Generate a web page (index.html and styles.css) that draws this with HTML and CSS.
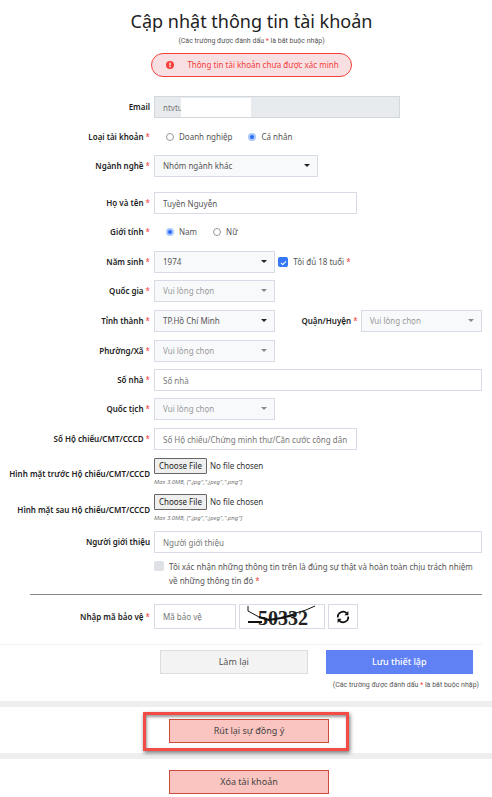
FILE: index.html
```html
<!DOCTYPE html>
<html lang="vi">
<head>
<meta charset="utf-8">
<meta name="viewport" content="width=device-width, initial-scale=1">
<title>Cập nhật thông tin tài khoản</title>
<link rel="stylesheet" href="styles.css">
</head>
<body>
<main>
<form class="account">
  <header class="head">
    <h1>Cập nhật thông tin tài khoản</h1>
    <p class="note">(Các trường được đánh dấu <b class="req">*</b> là bắt buộc nhập)</p>
    <p class="alert">
      <svg viewBox="0 0 16 16" aria-hidden="true"><circle cx="8" cy="8" r="8" fill="#f5403c"/><path d="M6.5 3.5h3v5.3h-3zM6.5 10h3v2.5h-3z" fill="#fbe3e4"/></svg>
      <span>Thông tin tài khoản chưa được xác minh</span>
    </p>
  </header>

  <div class="group">
    <div class="row">
      <label class="name" for="email">Email</label>
      <div class="field w-email masked"><input class="box" id="email" type="text" value="ntvtu" readonly><span class="mask"></span></div>
    </div>
  </div>
  <div class="group">
    <div class="row" role="radiogroup" aria-labelledby="kind">
      <span class="name" id="kind">Loại tài khoản <b class="req">*</b></span>
      <div class="radios">
        <label><input type="radio" name="kind">Doanh nghiệp</label>
        <label><input type="radio" name="kind" checked>Cá nhân</label>
      </div>
    </div>
    <div class="row">
      <label class="name" for="trade">Ngành nghề <b class="req">*</b></label>
      <div class="field w-half pick"><select class="box" id="trade"><option>Nhóm ngành khác</option></select></div>
    </div>
  </div>
  <div class="group spaced">
    <div class="row">
      <label class="name" for="fullname">Họ và tên <b class="req">*</b></label>
      <div class="field w-wide"><input class="box" id="fullname" type="text" value="Tuyền Nguyễn"></div>
    </div>
    <div class="row" role="radiogroup" aria-labelledby="gender">
      <span class="name" id="gender">Giới tính <b class="req">*</b></span>
      <div class="radios">
        <label><input type="radio" name="gender" checked>Nam</label>
        <label><input type="radio" name="gender">Nữ</label>
      </div>
    </div>
  </div>
  <div class="group">
    <div class="row">
      <label class="name" for="year">Năm sinh <b class="req">*</b></label>
      <div class="line">
        <div class="field w-short pick"><select class="box" id="year"><option>1974</option></select></div>
        <label class="tick"><input type="checkbox" checked><span>Tôi đủ 18 tuổi <b class="req">*</b></span></label>
      </div>
    </div>
    <div class="row">
      <label class="name" for="country">Quốc gia <b class="req">*</b></label>
      <div class="field w-short pick empty"><select class="box" id="country"><option>Vui lòng chọn</option></select></div>
    </div>
  </div>
  <div class="group">
    <div class="row">
      <label class="name" for="city">Tỉnh thành <b class="req">*</b></label>
      <div class="line">
        <div class="field w-short pick"><select class="box" id="city"><option>TP.Hồ Chí Minh</option></select></div>
        <label class="name district" for="district">Quận/Huyện <b class="req">*</b></label>
        <div class="field w-short pick empty"><select class="box" id="district"><option>Vui lòng chọn</option></select></div>
      </div>
    </div>
  </div>
  <div class="group">
    <div class="row">
      <label class="name" for="ward">Phường/Xã <b class="req">*</b></label>
      <div class="field w-short pick empty"><select class="box" id="ward"><option>Vui lòng chọn</option></select></div>
    </div>
    <div class="row">
      <label class="name" for="house">Số nhà <b class="req">*</b></label>
      <div class="field"><input class="box" id="house" type="text" placeholder="Số nhà"></div>
    </div>
    <div class="row">
      <label class="name" for="nation">Quốc tịch <b class="req">*</b></label>
      <div class="field w-short pick empty"><select class="box" id="nation"><option>Vui lòng chọn</option></select></div>
    </div>
  </div>
  <div class="group">
    <div class="row">
      <label class="name" for="idno">Số Hộ chiếu/CMT/CCCD <b class="req">*</b></label>
      <div class="field w-wide"><input class="box" id="idno" type="text" placeholder="Số Hộ chiếu/Chứng minh thư/Căn cước công dân"></div>
    </div>
  </div>
  <div class="group files">
    <div class="row">
      <label class="name" for="front">Hình mặt trước Hộ chiếu/CMT/CCCD</label>
      <div class="file"><input type="file" id="front"><small>Max 3.0MB, [".jpg",".jpeg",".png"]</small></div>
    </div>
    <div class="row">
      <label class="name" for="back">Hình mặt sau Hộ chiếu/CMT/CCCD</label>
      <div class="file"><input type="file" id="back"><small>Max 3.0MB, [".jpg",".jpeg",".png"]</small></div>
    </div>
  </div>
  <div class="group consent">
    <div class="row">
      <label class="name" for="ref">Người giới thiệu</label>
      <div class="field"><input class="box" id="ref" type="text" placeholder="Người giới thiệu"></div>
    </div>
    <div class="row">
      <span></span>
      <label class="tick agree"><input type="checkbox"><span>Tôi xác nhận những thông tin trên là đúng sự thật và hoàn toàn chịu trách nhiệm về những thông tin đó <b class="req">*</b></span></label>
    </div>
  </div>
  <hr class="rule">
  <div class="row captcha">
    <label class="name" for="code">Nhập mã bảo vệ <b class="req">*</b></label>
    <div class="line">
      <input class="box code" id="code" type="text" placeholder="Mã bảo vệ">
      <svg class="box picture" viewBox="0 0 84 23" role="img" aria-label="50332">
        <text x="18" y="20" class="digits">50332</text>
        <path d="M8 1v5l11 6 8 2M42 13l14-5 10-3 9-4" fill="none" stroke="#111" stroke-width="1"/>
        <path d="M8 17l14 0M19 12l10 3 12-2 13-3" fill="none" stroke="#111" stroke-width="2"/>
      </svg>
      <button class="box reload" type="button" aria-label="Đổi mã">
        <svg viewBox="0 0 14 14" aria-hidden="true"><g fill="none" stroke="#111" stroke-width="1.7"><path d="M1.8 7.5A5.2 5.2 0 0 1 10.8 3.4"/><path d="M12.2 6.5A5.2 5.2 0 0 1 3.2 10.6"/></g><path d="M12.4 1v4.2H8.4zM1.6 13V8.8h4z" fill="#111"/></svg>
      </button>
    </div>
  </div>
  <footer class="actions">
    <button class="reset" type="reset">Làm lại</button>
    <div class="save">
      <button class="primary" type="submit">Lưu thiết lập</button>
      <p class="note">(Các trường được đánh dấu <b class="req">*</b> là bắt buộc nhập)</p>
    </div>
  </footer>
</form>
<section class="band withdraw">
  <div class="marked"><button class="danger" type="button">Rút lại sự đồng ý</button></div>
</section>
<section class="band remove"><button class="danger" type="button">Xóa tài khoản</button></section>
</main>
</body>
</html>
```
FILE: styles.css
```css
* { box-sizing: border-box; }
body { margin: 0; background: #fff; color: #555; font: 8px/14px "Noto Sans", sans-serif; }
input, select, button { font: inherit; color: inherit; margin: 0; }
p, h1 { margin: 0; }
.req { color: #f5403c; font-weight: 400; }

.account { padding: 8px 10px 9px 0; }
.head { display: flex; flex-direction: column; align-items: center; padding-left: 21px; margin-bottom: 19px; }
h1 { font-size: 18px; line-height: 26px; font-weight: 400; color: #222; }
.note { font: 7px/14px Roboto, sans-serif; }
.alert { display: flex; align-items: center; gap: 13px; height: 24px; margin-top: 5px; padding: 0 12px 0 14px; border: 1px solid #f5403c; border-radius: 12px; background: #f8dfe1; color: #f5403c; }
.alert svg { width: 8px; height: 8px; }

.group { display: flex; flex-direction: column; gap: 7px; margin-bottom: 8px; }
.spaced { margin-top: 15px; }
.row { display: grid; grid-template-columns: 150px 1fr; column-gap: 4px; align-items: center; min-height: 22px; }
.name { text-align: right; font-weight: 600; color: #222; white-space: nowrap; }
.line { display: flex; align-items: center; gap: 3px; }
.district { flex: 1; }
.field { position: relative; width: 100%; }
.w-email { width: 75%; }
.w-half { width: 50%; }
.w-wide { width: 62%; }
.w-short { width: 37%; }
.box { display: block; width: 100%; height: 22px; padding: 0 8px; border: 1px solid #d8dbe5; border-radius: 0; background: #fff; outline: 0; }
.box::placeholder { color: #777; opacity: 1; }
.masked .box { background: #e8ebee; border-color: #d3d8de; color: #777; }
.mask { position: absolute; left: 27px; top: 2px; width: 70px; height: 19px; background: #fff; }
.pick .box { appearance: none; background: #f8f9fb; }
.pick::after { content: ""; position: absolute; right: 8px; top: 9px; border: 3px solid transparent; border-top-color: #222; border-bottom: 0; }
.empty { color: #999; }
.empty::after { border-top-color: #888; }

.radios { display: flex; gap: 16px; padding-left: 12px; }
.radios label { display: flex; align-items: center; gap: 5px; }
.radios input { appearance: none; width: 8px; height: 8px; border: 1px solid #999; border-radius: 50%; background: #fff; }
.radios input:checked { border: 2px solid #a9c6fb; background: #2b6cf6; }
.tick { display: flex; align-items: center; gap: 5px; }
.tick input { appearance: none; flex: none; width: 10px; height: 10px; border-radius: 2px; background: #dee2e6; }
.tick input:checked { display: grid; place-items: center; background: #3478f6; }
.tick input:checked::after { content: ""; width: 4px; height: 2px; border: solid #fff; border-width: 0 0 1px 1px; rotate: -45deg; }
.agree { align-items: flex-start; }
.agree input { margin-top: 1px; }

.files { gap: 5px; margin-bottom: 6px; }
.file { display: flex; flex-direction: column; gap: 1px; }
.file input { width: 100%; height: 16px; line-height: 14px; color: #333; }
.file input::file-selector-button { height: 16px; margin: 0 3px 0 0; padding: 0 4px; border: 1px solid #666; border-radius: 1px; background: #efefef; color: #222; font: inherit; }
.file small { font: italic 6px/14px "Noto Sans", sans-serif; color: #777; }

.consent { margin-bottom: 6px; }
.rule { margin: 0 0 9px 30px; border: 0; border-top: 1px solid #888; }
.captcha .line { align-items: stretch; }
.captcha .box { height: 25px; }
.captcha .code { width: 25%; }
.captcha .picture { width: 86px; padding: 0; }
.digits { font: 700 20px "Liberation Serif", serif; fill: #222; }
.captcha .reload { display: grid; place-items: center; width: 30px; padding: 0; }
.reload svg { width: 14px; height: 14px; }

.actions { display: grid; grid-template-columns: 1fr 1fr; column-gap: 18px; margin: 15px 0 0 0; padding: 5px 9px 0 160px; border-top: 1px solid #f1f1f1; align-items: start; }
.actions button { width: 100%; height: 24px; border: 1px solid #ddd; background: #f3f3f3; font-size: 9px; }
.actions .primary { border: 0; background: #5f81f4; color: #fff; font-weight: 500; }
.save .note { margin: 4px -6px 0 0; text-align: right; white-space: nowrap; }

.band { display: flex; justify-content: center; border-top: 6px solid #eee; }
.withdraw { padding-top: 5px; padding-bottom: 2px; }
.marked { width: 42%; padding: 4px 17px 5px 23px; border: 3px solid #f34b46; box-shadow: 1px 2px 4px #777, inset 1px 2px 3px #999; }
.danger { width: 100%; height: 24px; border: 1px solid #cd4a3d; background: #fac5c0; font-size: 9px; color: #444; }
.remove { padding: 11px 0 3px 6px; }
.remove .danger { width: 33%; }
```
